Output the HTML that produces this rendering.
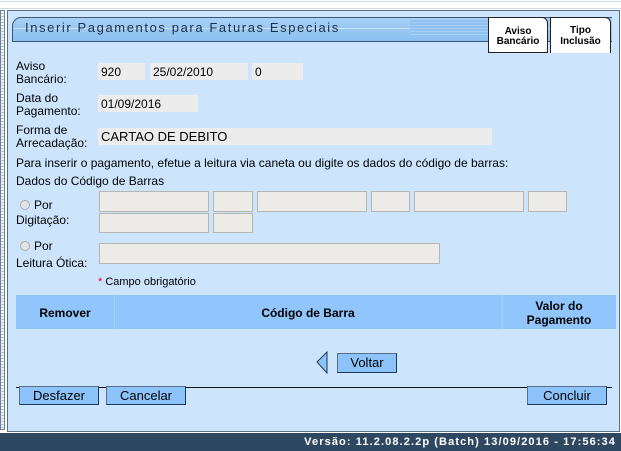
<!DOCTYPE html><html><head><meta charset="utf-8"><style>
*{margin:0;padding:0;box-sizing:border-box}
body{width:621px;height:451px;background:#fff;font-family:"Liberation Sans",Arial,sans-serif;font-size:12px;color:#000;position:relative;overflow:hidden}
.a{position:absolute}
.in{position:absolute;background:#ececec;font-size:12px;padding:2px 3px}
.b{position:absolute;border:1px solid #5a6f84;border-right-color:#1c3a55;border-bottom-color:#1c3a55;background:#8cc3fa;font-size:13px;text-align:center;line-height:17px}
.l{position:absolute;font-size:12px;line-height:13px}
.box{position:absolute;background:#ecebe7;border:1px solid #b6b6b0}
.r{display:inline-block;width:10px;height:10px;border-radius:50%;background:#e4e4e4;border:1px solid #aaa;vertical-align:-1px;margin-right:4px}
</style></head><body>
<div class="a" style="left:0;top:1px;width:621px;height:1px;background:#c8dcee"></div>
<div class="a" style="left:0;top:8px;width:621px;height:1px;background:#c8dcee"></div>
<div class="a" style="left:0;top:10px;width:5px;height:420px;border:1px solid #6d8196;background:repeating-linear-gradient(#eef4fa 0 2px,#b7c7d6 2px 3px)"></div>
<div class="a" style="left:7px;top:10px;width:613px;height:422px;background:#cce5fd;border:1px solid #5d6f82"></div>
<div class="a" style="left:12px;top:17px;width:600px;height:25px;background:linear-gradient(#a7d0f6,#8cc0f0);border:1px solid #3d5873;border-radius:9px 0 0 0;border-right:none"></div>
<div class="a" style="left:14px;top:28px;width:596px;height:1px;background:#c9e2f8"></div>
<div class="a" style="left:25px;top:20px;font-size:13px;letter-spacing:1.6px;color:#1d2f44">Inserir Pagamentos para Faturas Especiais</div>
<div class="a" style="left:410px;top:19px;width:78px;height:18px;background:repeating-linear-gradient(#a9d0f4 0 1px,#8fc2f0 1px 3px)"></div>
<div class="a" style="left:488px;top:17px;width:60px;height:36px;background:#fff;border:1px solid #222;border-radius:0 6px 0 0"></div>
<div class="a" style="left:489px;top:27px;width:58px;text-align:center;font-size:10px;font-weight:bold;line-height:10px">Aviso<br>Bancário</div>
<div class="a" style="left:550px;top:17px;width:61px;height:36px;background:#fff;border:1px solid #222;border-bottom:none;border-radius:0 6px 0 0"></div>
<div class="a" style="left:550px;top:25px;width:61px;text-align:center;font-size:10px;font-weight:bold;line-height:11px">Tipo<br>Inclusão</div>

<div class="l" style="left:16px;top:60px">Aviso<br>Bancário:</div>
<div class="in" style="left:98px;top:63px;width:47px;height:17px">920</div>
<div class="in" style="left:150px;top:63px;width:98px;height:17px">25/02/2010</div>
<div class="in" style="left:252px;top:63px;width:51px;height:17px">0</div>
<div class="l" style="left:16px;top:92px">Data do<br>Pagamento:</div>
<div class="in" style="left:98px;top:95px;width:100px;height:17px">01/09/2016</div>
<div class="l" style="left:16px;top:124px">Forma de<br>Arrecadação:</div>
<div class="in" style="left:98px;top:128px;width:394px;height:17px;font-size:13px;padding-top:1px">CARTAO DE DEBITO</div>
<div class="a" style="left:16px;top:156px;font-size:12px">Para inserir o pagamento, efetue a leitura via caneta ou digite os dados do código de barras:</div>
<div class="a" style="left:16px;top:174px;font-size:12px">Dados do Código de Barras</div>
<div class="box" style="left:99px;top:191px;width:110px;height:21px"></div>
<div class="box" style="left:213px;top:191px;width:40px;height:21px"></div>
<div class="box" style="left:257px;top:191px;width:110px;height:21px"></div>
<div class="box" style="left:371px;top:191px;width:39px;height:21px"></div>
<div class="box" style="left:414px;top:191px;width:110px;height:21px"></div>
<div class="box" style="left:528px;top:191px;width:39px;height:21px"></div>
<div class="box" style="left:99px;top:213px;width:110px;height:20px"></div>
<div class="box" style="left:213px;top:213px;width:40px;height:20px"></div>
<div class="l" style="left:20px;top:199px"><span class="r"></span>Por</div>
<div class="l" style="left:16px;top:214px">Digitação:</div>
<div class="l" style="left:20px;top:240px"><span class="r"></span>Por</div>
<div class="l" style="left:16px;top:257px">Leitura Ótica:</div>
<div class="box" style="left:99px;top:243px;width:341px;height:21px"></div>
<div class="a" style="left:98px;top:276px;font-size:11px"><span style="color:#e00">*</span> Campo obrigatório</div>

<div class="a" style="left:16px;top:295px;width:600px;height:34px;background:#90c6fb"></div>
<div class="a" style="left:114px;top:295px;width:1px;height:34px;background:#a8d3fc"></div>
<div class="a" style="left:502px;top:295px;width:1px;height:34px;background:#a8d3fc"></div>
<div class="a" style="left:16px;top:306px;width:98px;text-align:center;font-weight:bold">Remover</div>
<div class="a" style="left:114px;top:306px;width:388px;text-align:center;font-weight:bold">Código de Barra</div>
<div class="a" style="left:502px;top:299px;width:114px;text-align:center;font-weight:bold;line-height:14px">Valor do<br>Pagamento</div>

<svg class="a" style="left:315px;top:351px" width="14" height="24"><polygon points="12,1 2,11 12,22" fill="#8cc3fa" stroke="#1c3a55"/></svg>
<div class="b" style="left:337px;top:353px;width:60px;height:20px">Voltar</div>
<div class="a" style="left:16px;top:387px;width:596px;height:1px;background:#111"></div>
<div class="b" style="left:19px;top:386px;width:80px;height:19px">Desfazer</div>
<div class="b" style="left:106px;top:386px;width:80px;height:19px">Cancelar</div>
<div class="b" style="left:527px;top:386px;width:80px;height:19px">Concluir</div>

<div class="a" style="left:0;top:433px;width:621px;height:18px;background:#2f4861"></div>
<div class="a" style="right:5px;top:436px;color:#fff;font-weight:bold;font-size:11px;letter-spacing:1.1px">Versão: 11.2.08.2.2p (Batch) 13/09/2016 - 17:56:34</div>
</body></html>
